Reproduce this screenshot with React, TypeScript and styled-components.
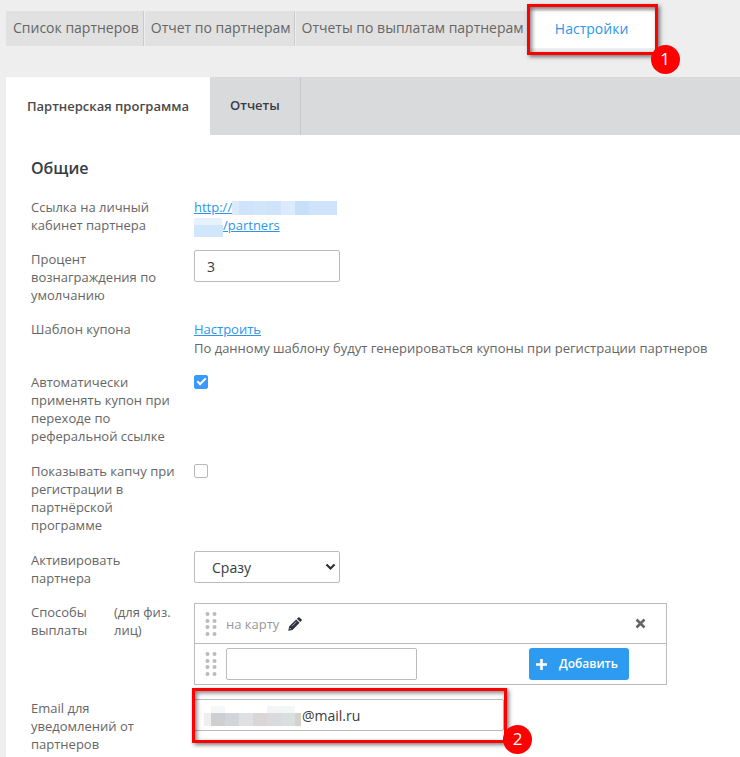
import React, { useState } from "react";
import styled, { createGlobalStyle, css } from "styled-components";

const GlobalStyle = createGlobalStyle`
  *, *::before, *::after { box-sizing: border-box; }
  html, body { margin: 0; background: #eee; }
  body, button, input, select {
    font-family: "Open Sans", "Noto Sans", sans-serif;
    font-size: 13px;
    line-height: 18px;
    color: #666;
  }
`;

const Page = styled.div`
  display: flex;
  flex-direction: column;
  min-height: 100vh;
  padding: 11px 0 0 6px;
`;

const TopNav = styled.nav`
  display: flex;
  align-items: flex-start;
  height: 66px;
`;

const NavLink = styled.a`
  height: 35px;
  padding: 0 3px 0 6px;
  margin-right: 1px;
  border-right: 1px solid #c8cacc;
  background: #e1e1e1;
  color: #666;
  font-size: 14px;
  line-height: 34px;
  text-decoration: none;
  white-space: nowrap;

  &:first-of-type {
    padding: 0 4px 0 7px;
  }
  &:last-of-type {
    padding-right: 5px;
    margin-right: 0;
    border-right: 0;
  }
`;

const ActiveNav = styled.div`
  position: relative;
  width: 126px;
`;

const ActiveNavLink = styled.a`
  display: block;
  height: 37px;
  background: #fff;
  color: #2d96ec;
  font-size: 14px;
  line-height: 36px;
  text-align: center;
  text-decoration: none;
`;

const Highlight = styled.div<{ $top: number; $bottom: number }>`
  position: absolute;
  top: ${(p) => p.$top}px;
  bottom: ${(p) => p.$bottom}px;
  left: -2px;
  right: -3px;
  border: 3px solid #f00;
  box-shadow: 2px 2px 4px rgba(0, 0, 0, 0.5), inset 2px 2px 4px rgba(0, 0, 0, 0.5);
  pointer-events: none;
`;

const Badge = styled.span<{ $right: number; $bottom: number }>`
  position: absolute;
  right: ${(p) => p.$right}px;
  bottom: ${(p) => p.$bottom}px;
  width: 29px;
  height: 29px;
  border-radius: 50%;
  background: #f00;
  color: #fff;
  font-size: 17px;
  line-height: 28px;
  text-align: center;
`;

const TabBar = styled.div`
  display: flex;
  height: 58px;
  background: #d9dadc;
`;

const Tab = styled.button<{ $active?: boolean }>`
  padding: 0 20px 2px;
  border: 0;
  border-right: 1px solid #c5c9ce;
  background: transparent;
  color: #363b48;
  font-weight: 600;
  cursor: pointer;
  ${(p) =>
    p.$active &&
    css`
      padding: 0 21px;
      border-right: 0;
      background: #fff;
      color: #4a4a4a;
    `}
`;

const Panel = styled.main`
  flex: 1;
  padding: 21px 25px 0;
  background: #fff;
`;

const Heading = styled.h2`
  margin: 0 0 18px;
  color: #363b48;
  font-size: 16px;
  font-weight: 600;
  line-height: 24px;
`;

const Row = styled.div<{ $gap?: number }>`
  display: grid;
  grid-template-columns: 147px minmax(0, 1fr);
  column-gap: 16px;
  align-items: start;
  margin-bottom: ${(p) => p.$gap ?? 16}px;
`;

const Label = styled.label``;

const SplitLabel = styled.div`
  display: grid;
  grid-template-columns: 67px 1fr;
  column-gap: 16px;
`;

const Field = styled.div`
  min-width: 0;
`;

const Link = styled.a`
  color: #2d96ec;
  text-decoration: underline;
`;

const Mosaic = styled.svg`
  display: inline-block;
  overflow: visible;
  vertical-align: top;
`;

const Help = styled.p`
  margin: 1px 0 0;
`;

const box = css`
  height: 32px;
  border: 1px solid #bbb;
  border-radius: 2px;
  background: #fff;
  color: #363b40;
  font-size: 14px;
`;

const TextInput = styled.input`
  ${box}
  display: block;
  width: 146px;
  padding: 0 12px;
`;

const MethodInput = styled(TextInput)`
  width: 191px;
`;

const EmailWrap = styled.div`
  position: relative;
  width: 310px;
`;

const EmailInput = styled(TextInput)`
  width: 100%;
  padding-left: 107px;
`;

const EmailMosaic = styled.svg`
  position: absolute;
  left: 10px;
  top: 7px;
`;

const SelectWrap = styled.div`
  position: relative;
  width: 146px;
`;

const Select = styled.select`
  ${box}
  display: block;
  width: 100%;
  padding: 2px 17px 0;
  appearance: none;
`;

const SelectArrow = styled.svg`
  position: absolute;
  right: 4px;
  top: 12px;
  pointer-events: none;
`;

const Checkbox = styled.input`
  display: grid;
  place-items: center;
  width: 14px;
  height: 14px;
  margin: 2px 0 0;
  border: 1px solid #b8b8b8;
  border-radius: 2px;
  background: #fff;
  appearance: none;

  &:checked {
    border-color: #3b99fc;
    background: #3b99fc;
  }
  &:checked::after {
    content: "";
    width: 9px;
    height: 5px;
    margin-bottom: 3px;
    border: solid #fff;
    border-width: 0 0 2px 2px;
    transform: rotate(-45deg);
  }
`;

const Methods = styled.ul`
  width: 100%;
  max-width: 473px;
  margin: 0;
  padding: 0;
  border: 1px solid #bbb;
  list-style: none;
`;

const Method = styled.li`
  display: flex;
  align-items: center;
  height: 39px;
  padding-left: 10px;

  & + & {
    height: 41px;
    border-top: 1px solid #bbb;
  }
`;

const Handle = styled.svg`
  flex: none;
  margin-right: 9px;
`;

const MethodName = styled.span`
  margin-right: 9px;
  color: #999;
`;

const IconButton = styled.button`
  display: flex;
  padding: 0;
  border: 0;
  background: none;
  color: #2c3042;
  cursor: pointer;
`;

const RemoveButton = styled(IconButton)`
  margin: 0 20px 0 auto;
  color: #666;
`;

const AddButton = styled.button`
  display: flex;
  align-items: center;
  gap: 12px;
  height: 32px;
  margin: 0 37px 0 auto;
  padding: 0 11px 0 7px;
  border: 0;
  border-radius: 3px;
  background: #2d9cf0;
  color: #fff;
  font-size: 12px;
  font-weight: 600;
  cursor: pointer;
`;

const DragHandle = () => (
  <Handle width="12" height="26" viewBox="0 0 12 26" fill="#bbb" aria-hidden="true">
    {[3, 10, 16, 23].map((y) => (
      <React.Fragment key={y}>
        <circle cx="2.5" cy={y} r="2" />
        <circle cx="9.5" cy={y} r="2" />
      </React.Fragment>
    ))}
  </Handle>
);

export default function App() {
  const [percent, setPercent] = useState("3");
  const [autoCoupon, setAutoCoupon] = useState(true);
  const [captcha, setCaptcha] = useState(false);
  const [email, setEmail] = useState("@mail.ru");
  const [method, setMethod] = useState("");

  return (
    <>
      <GlobalStyle />
      <Page>
        <TopNav>
          <NavLink href="#list">Список партнеров</NavLink>
          <NavLink href="#report">Отчет по партнерам</NavLink>
          <NavLink href="#payments">Отчеты по выплатам партнерам</NavLink>
          <ActiveNav>
            <ActiveNavLink href="#settings">Настройки</ActiveNavLink>
            <Highlight $top={-7} $bottom={-7}>
              <Badge $right={-25} $bottom={-22}>1</Badge>
            </Highlight>
          </ActiveNav>
        </TopNav>

        <TabBar role="tablist">
          <Tab role="tab" aria-selected="true" $active>
            Партнерская программа
          </Tab>
          <Tab role="tab" aria-selected="false">
            Отчеты
          </Tab>
        </TabBar>

        <Panel>
          <Heading>Общие</Heading>

          <Row>
            <span>Ссылка на личный кабинет партнера</span>
            <Field>
              <Link href="#partners">
                http://
                <Mosaic width="105" height="18" shapeRendering="crispEdges" aria-hidden="true">
                  <rect y="3" width="105" height="14" fill="#cfe4fa" />
                  <rect y="3" width="7" height="14" fill="#dbebfb" />
                  <rect x="21" y="3" width="14" height="14" fill="#d2e6fb" />
                  <rect x="49" y="3" width="14" height="14" fill="#dbebfb" />
                  <rect x="63" y="3" width="14" height="14" fill="#c7dff8" />
                </Mosaic>
                <br />
                <Mosaic width="29" height="18" shapeRendering="crispEdges" aria-hidden="true">
                  <rect y="2" width="28" height="7" fill="#e8f2fd" />
                  <rect y="9" width="29" height="12" fill="#cfe6fb" />
                </Mosaic>
                /partners
              </Link>
            </Field>
          </Row>

          <Row>
            <Label htmlFor="percent">Процент вознаграждения по умолчанию</Label>
            <Field>
              <TextInput id="percent" value={percent} onChange={(e) => setPercent(e.target.value)} />
            </Field>
          </Row>

          <Row>
            <span>Шаблон купона</span>
            <Field>
              <Link href="#template">Настроить</Link>
              <Help>По данному шаблону будут генерироваться купоны при регистрации партнеров</Help>
            </Field>
          </Row>

          <Row $gap={17}>
            <Label htmlFor="auto">Автоматически применять купон при переходе по реферальной ссылке</Label>
            <Field>
              <Checkbox
                id="auto"
                type="checkbox"
                checked={autoCoupon}
                onChange={(e) => setAutoCoupon(e.target.checked)}
              />
            </Field>
          </Row>

          <Row $gap={17}>
            <Label htmlFor="captcha">Показывать капчу при регистрации в партнёрской программе</Label>
            <Field>
              <Checkbox
                id="captcha"
                type="checkbox"
                checked={captcha}
                onChange={(e) => setCaptcha(e.target.checked)}
              />
            </Field>
          </Row>

          <Row>
            <Label htmlFor="activate">Активировать партнера</Label>
            <SelectWrap>
              <Select id="activate" defaultValue="now">
                <option value="now">Сразу</option>
              </Select>
              <SelectArrow width="11" height="8" viewBox="0 0 11 8" fill="none" aria-hidden="true">
                <path d="M1.5 1.5 5.5 5.5 9.5 1.5" stroke="#2b2f36" strokeWidth="2.2" />
              </SelectArrow>
            </SelectWrap>
          </Row>

          <Row $gap={14}>
            <SplitLabel>
              <Label htmlFor="method">Способы выплаты</Label>
              <span>(для физ. лиц)</span>
            </SplitLabel>
            <Methods>
              <Method>
                <DragHandle />
                <MethodName>на карту</MethodName>
                <IconButton type="button" aria-label="Редактировать">
                  <svg width="14" height="14" viewBox="0 0 14 14" aria-hidden="true">
                    <path
                      fill="currentColor"
                      d="M.3 13.7 1.1 9.5 8.2 2.4 11.6 5.8 4.5 12.9ZM8.9 1.7 10.2.4Q10.9-.1 11.6.4L13.6 2.4Q14.1 3.1 13.6 3.8L12.3 5.1Z"
                    />
                    <path d="M4 9.2 8.4 4.8" stroke="#fff" strokeWidth=".6" />
                    <path d="M1.8 11.2 2.8 12.2" stroke="#fff" strokeWidth="1" />
                  </svg>
                </IconButton>
                <RemoveButton type="button" aria-label="Удалить">
                  <svg width="11" height="11" viewBox="0 0 11 11" aria-hidden="true">
                    <path d="M1.5 1.5 9.5 9.5M9.5 1.5 1.5 9.5" stroke="currentColor" strokeWidth="2.6" />
                  </svg>
                </RemoveButton>
              </Method>
              <Method>
                <DragHandle />
                <MethodInput id="method" value={method} onChange={(e) => setMethod(e.target.value)} />
                <AddButton type="button">
                  <svg width="11" height="11" viewBox="0 0 11 11" aria-hidden="true">
                    <path d="M5.5 0V11M0 5.5H11" stroke="currentColor" strokeWidth="2.6" />
                  </svg>
                  Добавить
                </AddButton>
              </Method>
            </Methods>
          </Row>

          <Row $gap={0}>
            <Label htmlFor="email">Email для уведомлений от партнеров</Label>
            <EmailWrap>
              <EmailInput id="email" value={email} onChange={(e) => setEmail(e.target.value)} />
              <EmailMosaic width="97" height="20" shapeRendering="crispEdges" aria-hidden="true">
                <rect x="7" width="14" height="7" fill="#f6f7f7" />
                <rect x="63" width="14" height="7" fill="#f4f4f5" />
                <rect x="77" width="14" height="7" fill="#f1f6f6" />
                <rect y="7" width="7" height="13" fill="#efeeeb" />
                <rect x="7" y="7" width="14" height="13" fill="#cdcfd3" />
                <rect x="21" y="7" width="14" height="13" fill="#d2d4d9" />
                <rect x="35" y="7" width="14" height="13" fill="#dfe0e1" />
                <rect x="49" y="7" width="14" height="13" fill="#dbd6d5" />
                <rect x="63" y="7" width="14" height="13" fill="#d9dae0" />
                <rect x="77" y="7" width="14" height="13" fill="#d8e0df" />
                <rect x="91" y="7" width="6" height="13" fill="#d5d1cb" />
              </EmailMosaic>
              <Highlight $top={-11} $bottom={-12}>
                <Badge $right={-28} $bottom={-14}>2</Badge>
              </Highlight>
            </EmailWrap>
          </Row>
        </Panel>
      </Page>
    </>
  );
}
